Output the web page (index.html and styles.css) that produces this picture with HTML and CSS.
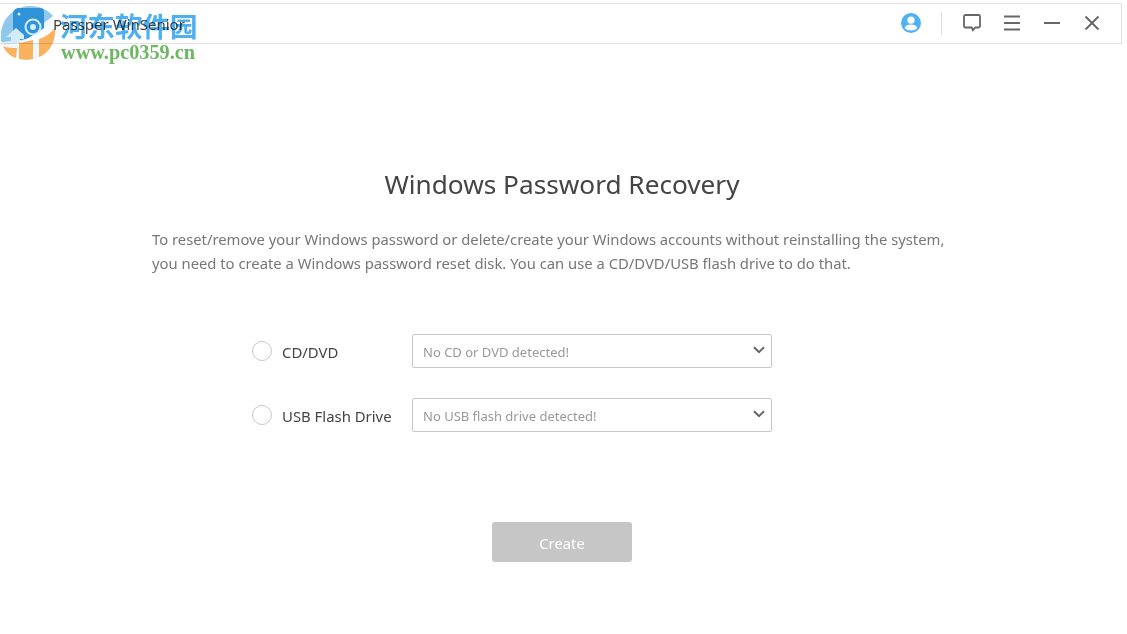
FILE: index.html
```html
<!DOCTYPE html>
<html lang="en">
<head>
    <meta charset="UTF-8">
    <meta name="viewport" content="width=device-width, initial-scale=1.0">
    <title>Passper WinSenior</title>
    <link rel="stylesheet" href="styles.css">
</head>
<body>
    <div class="window">
        <header class="title-bar">
            <span class="app-name">Passper WinSenior</span>
            <div class="title-actions">
                <svg class="icon icon-user" width="22" height="22" viewBox="0 0 22 22">
                    <circle cx="11" cy="11" r="10" fill="#4db2f5"/>
                    <circle cx="11" cy="8.2" r="3.6" fill="#fff"/>
                    <path d="M4.6 16c.8-2.6 3.4-3.6 6.4-3.6s5.600 1 6.400 3.600c-1.600 1.700-3.800 2.500-6.400 2.500s-4.800-.8-6.400-2.500z" fill="#fff"/>
                </svg>
                <span class="divider"></span>
                <svg class="icon icon-feedback" width="20" height="20" viewBox="0 0 20 20">
                    <path d="M3.500 2h13c.8 0 1.500.7 1.500 1.500v9.500c0 .8-.7 1.500-1.500 1.500h-3.300l-2.400 3-1-3H3.500c-.8 0-1.500-.7-1.500-1.500V3.500C2 2.700 2.700 2 3.500 2z" fill="none" stroke="#666" stroke-width="1.800" stroke-linejoin="round"/>
                </svg>
                <svg class="icon icon-menu" width="20" height="20" viewBox="0 0 20 20">
                    <path d="M2 3.500h16M2 10h16M2 16.500h16" stroke="#666" stroke-width="2" fill="none"/>
                </svg>
                <svg class="icon icon-min" width="20" height="20" viewBox="0 0 20 20">
                    <path d="M2 10h16" stroke="#666" stroke-width="2" fill="none"/>
                </svg>
                <svg class="icon icon-close" width="20" height="20" viewBox="0 0 20 20">
                    <path d="M3.500 3.500l13 13M16.500 3.500l-13 13" stroke="#666" stroke-width="1.900" fill="none"/>
                </svg>
            </div>
        </header>

        <main class="content">
            <h1>Windows Password Recovery</h1>
            <p class="intro">To reset/remove your Windows password or delete/create your Windows accounts without reinstalling the system, you need to create a Windows password reset disk. You can use a CD/DVD/USB flash drive to do that.</p>

            <div class="drive-list">
                <div class="drive-row">
                    <span class="radio"></span>
                    <span class="drive-label">CD/DVD</span>
                    <div class="select">
                        <span>No CD or DVD detected!</span>
                        <svg width="12" height="8" viewBox="0 0 12 8"><path d="M1 1.200l5 5 5-5" stroke="#666" stroke-width="2" fill="none"/></svg>
                    </div>
                </div>
                <div class="drive-row">
                    <span class="radio"></span>
                    <span class="drive-label">USB Flash Drive</span>
                    <div class="select">
                        <span>No USB flash drive detected!</span>
                        <svg width="12" height="8" viewBox="0 0 12 8"><path d="M1 1.200l5 5 5-5" stroke="#666" stroke-width="2" fill="none"/></svg>
                    </div>
                </div>
            </div>

            <button class="create-btn" type="button">Create</button>
        </main>
    </div>

    <!-- site watermark, sits over the title bar -->
    <div class="watermark">
        <svg class="wm-logo" width="58" height="58" viewBox="0 0 58 58">
            <circle cx="28" cy="28" r="27" fill="#eef6fb"/>
            <path d="M1 36C-1 16 12 2 30 1c10 0 18 4 23 10L14 40z" fill="#8fc8ec"/>
            <path d="M13 9 Q13 4 18 3h22c3 0 4 2 4 4v16L24 36H13z" fill="#2f93d8"/>
            <path d="M1 35C3 38 6 40 11 40l-1-2C6 38 3 37 1 35z" fill="#2f93d8"/>
            <path d="M54 14c3 5 3 9 1 12-7 9-22 14-41 15C9 41 5 40 2 37l12-1c16-1 30-8 40-22z" fill="#fff" opacity=".85"/>
            <circle cx="33" cy="22" r="7.500" fill="none" stroke="#d4ebf9" stroke-width="2"/>
            <circle cx="33" cy="22" r="3" fill="#d4ebf9"/>
            <path d="M6 32l10-9 8 7v4H20v4h-9v-6z" fill="#d4ebf9"/>
            <circle cx="19" cy="9" r="1.500" fill="#d4ebf9"/>
            <path d="M3 41c4 2 9 2 14 2l-1 10c-6-2-10-6-13-12z" fill="#fbb25f"/>
            <path d="M19 38l14-3v19c-4 1-10 1-14 0z" fill="#fbb25f"/>
            <path d="M39 34c6-2 12-6 16-11 1 14-6 25-16 29z" fill="#fbb25f"/>
        </svg>
        <div class="wm-name">河东软件园</div>
        <div class="wm-url">www.pc0359.cn</div>
    </div>
</body>
</html>
```

FILE: styles.css
```css
/* Page */
body {
    margin: 0;
    background: #fff;
    font-family: "Noto Sans", "Open Sans", sans-serif;
    color: #333;
    overflow: hidden;
}

.window {
    width: 1122px;
    padding-top: 3px;
}

/* Title bar */
.title-bar {
    display: flex;
    justify-content: space-between;
    align-items: center;
    box-sizing: border-box;
    height: 41px;
    padding-left: 53px;
    border: 1px solid #e1e1e1;
    border-left: none;
}

.app-name {
    font-size: 15px;
    color: #444;
}

.title-actions {
    display: flex;
    align-items: center;
    padding: 0 19px 1px 0;
}

.icon {
    display: block;
}

.icon-user {
    margin-right: 19px;
}

.divider {
    width: 1px;
    height: 23px;
    background: #ddd;
    margin-right: 20px;
}

.icon-feedback,
.icon-menu,
.icon-min {
    margin-right: 20px;
}

/* Main */
.content {
    display: flex;
    flex-direction: column;
    align-items: center;
}

h1 {
    margin: 122px 0 0 2px;
    font-size: 26.200px;
    line-height: 37px;
    font-weight: 400;
    color: #444;
}

.intro {
    width: 818px;
    margin: 24px 0 0;
    font-size: 14.800px;
    line-height: 24px;
    color: #777;
}

.drive-list {
    display: flex;
    flex-direction: column;
    gap: 30px;
    align-self: flex-start;
    margin: 59px 0 0 252px;
}

.drive-row {
    display: flex;
    align-items: center;
}

.radio {
    box-sizing: border-box;
    width: 20px;
    height: 20px;
    margin-right: 10px;
    border: 1px solid #c8c8c8;
    border-radius: 50%;
}

.drive-label {
    width: 130px;
    padding-top: 2px;
    font-size: 14.900px;
    color: #444;
}

.select {
    display: flex;
    justify-content: space-between;
    align-items: center;
    box-sizing: border-box;
    width: 360px;
    height: 34px;
    padding: 0 6px 0 10px;
    border: 1px solid #c8c8c8;
    border-radius: 2px;
    font-size: 13px;
    color: #999;
}

.select span {
    padding-top: 2px;
}

.select svg {
    margin-top: -3px;
}

.create-btn {
    width: 140px;
    height: 40px;
    margin: 90px 0 0 2px;
    padding-top: 3px;
    border: none;
    border-radius: 3px;
    background: #c6c6c6;
    color: #fff;
    font-family: inherit;
    font-size: 14.800px;
}

/* Watermark */
.watermark {
    position: absolute;
    top: 0;
    left: 0;
    width: 200px;
    height: 64px;
    mix-blend-mode: multiply;
}

.wm-logo {
    position: absolute;
    top: 5px;
    left: 0;
}

.wm-name {
    position: absolute;
    top: 6px;
    left: 60px;
    font-family: "Noto Sans CJK SC", sans-serif;
    font-size: 27.500px;
    line-height: 38px;
    font-weight: 700;
    color: #4fb0f0;
    white-space: nowrap;
}

.wm-url {
    position: absolute;
    top: 41px;
    left: 61px;
    font-family: "Liberation Serif", serif;
    font-size: 20.300px;
    line-height: 22px;
    font-weight: 700;
    color: #6cb860;
    white-space: nowrap;
}
```
